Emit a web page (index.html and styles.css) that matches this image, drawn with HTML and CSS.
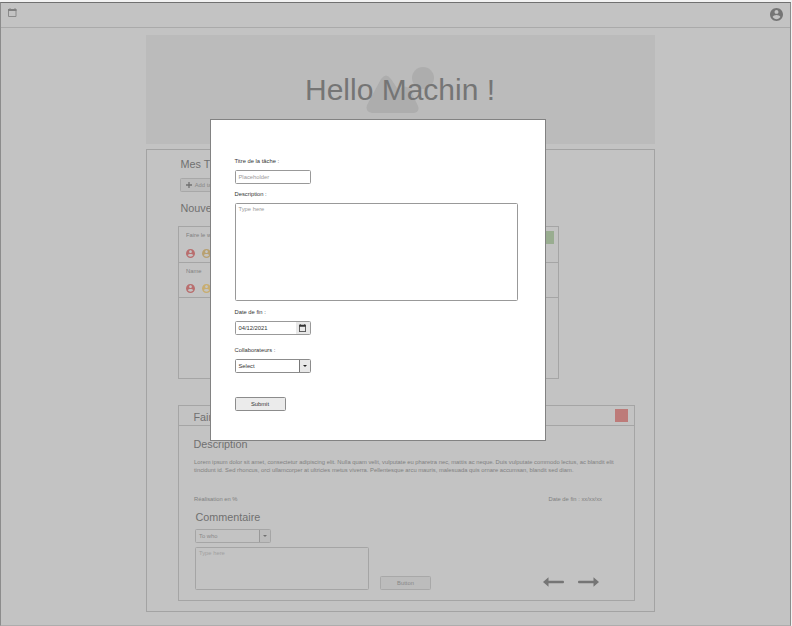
FILE: index.html
```html
<!DOCTYPE html>
<html lang="fr">
<head>
<meta charset="utf-8">
<title>Hello Machin !</title>
<link rel="stylesheet" href="styles.css">
</head>
<body>
<svg width="0" height="0" class="defs">
  <symbol id="user" viewBox="2 2 20 20"><path fill="currentColor" d="M12 2C6.48 2 2 6.48 2 12s4.48 10 10 10 10-4.48 10-10S17.52 2 12 2zm0 3c1.66 0 3 1.34 3 3s-1.340 3-3 3-3-1.340-3-3 1.340-3 3-3zm0 14.200c-2.500 0-4.710-1.280-6-3.220.03-1.990 4-3.080 6-3.080 1.990 0 5.970 1.090 6 3.080-1.290 1.940-3.500 3.220-6 3.220z"/></symbol>
  <symbol id="calendar" viewBox="3 1 18 21"><path fill="currentColor" d="M20 3h-1V1h-2v2H7V1H5v2H4c-.6 0-1 .4-1 1v17c0 .6.400 1 1 1h16c.6 0 1-.4 1-1V4c0-.6-.4-1-1-1zm-1 17H5V8h14v12z"/></symbol>
</svg>
<div class="page">
  <header class="topbar">
    <svg class="topbar-calendar" viewBox="0 0 9 9"><path d="M.5 1.500h7.500v7h-7.500zM2 0v2M7 0v2" fill="none" stroke="#8a8a8a"/><path d="M0 1h8.500v2H0z" fill="#808080"/></svg>
    <svg class="topbar-user"><use href="#user"/></svg>
  </header>
  <section class="hero">
    <svg class="hero-art" viewBox="0 0 70 50"><circle cx="57" cy="12" r="11"/><path d="M15 13Q20 6 25 13L33 25Q38 17 44 23L52 40Q54 46 48 47H6Q-1 46 1 39Z"/></svg>
    <h1>Hello Machin !</h1>
  </section>
  <main class="board">
    <h2>Mes Tâches</h2>
    <button class="add"><svg viewBox="0 0 6 6"><path d="M3 0v6M0 3h6" stroke="#707070" stroke-width="1.300"/></svg>Add task</button>
    <h2 class="second">Nouvelles</h2>
    <section class="list">
      <article class="task first">
        <p>Faire le wireframe</p>
        <div class="people"><svg class="red"><use href="#user"/></svg><svg class="gold"><use href="#user"/></svg></div>
        <i class="swatch green"></i>
      </article>
      <article class="task">
        <p>Name</p>
        <div class="people"><svg class="red"><use href="#user"/></svg><svg class="yellow"><use href="#user"/></svg></div>
      </article>
    </section>
    <section class="detail">
      <div class="detail-head"><h2>Faire</h2><i class="swatch coral"></i></div>
      <h2 class="desc">Description</h2>
      <p class="lorem">Lorem ipsum dolor sit amet, consectetur adipiscing elit. Nulla quam velit, vulputate eu pharetra nec, mattis ac neque. Duis vulputate commodo lectus, ac blandit elit<br>tincidunt id. Sed rhoncus, orci ullamcorper at ultricies metus viverra. Pellentesque arcu mauris, malesuada quis ornare accumsan, blandit sed diam.</p>
      <div class="meta"><span>Réalisation en %</span><span>Date de fin : xx/xx/xx</span></div>
      <h2 class="comment">Commentaire</h2>
      <div class="select dim"><span>To who</span><b><svg viewBox="0 0 4 2"><path d="M0 0h4L2 2z"/></svg></b></div>
      <div class="reply">
        <div class="area">Type here</div>
        <button type="button">Button</button>
        <nav class="arrows">
          <svg viewBox="0 0 21 10"><path d="M0 5L5.500 .3V9.700zM4 3.800H20q1 0 1 1.200t-1 1.200H4z"/></svg>
          <svg viewBox="0 0 21 10"><path d="M21 5L15.500 .3V9.700zM17 3.800H1Q0 3.800 0 5t1 1.200H17z"/></svg>
        </nav>
      </div>
    </section>
  </main>
</div>
<form class="modal">
  <label>Titre de la tâche :</label>
  <div class="field title">Placeholder</div>
  <label>Description :</label>
  <div class="field text">Type here</div>
  <label>Date de fin :</label>
  <div class="field date"><span>04/12/2021</span><b><svg><use href="#calendar"/></svg></b></div>
  <label>Collaborateurs :</label>
  <div class="select"><span>Select</span><b><svg viewBox="0 0 4 2"><path d="M0 0h4L2 2z"/></svg></b></div>
  <button type="button">Submit</button>
</form>
</body>
</html>
```
FILE: styles.css
```css
* { box-sizing: border-box; }
body {
  margin: 0;
  padding-top: 2px;
  height: 626px;
  overflow: hidden;
  position: relative;
  background: #f2f2f2;
  color: #808080;
  font: 5.8px/8px "Liberation Sans", Arial, sans-serif;
}
svg { display: block; }
.defs { position: absolute; }
h1, h2, p { margin: 0; font-weight: normal; }
h2 { font-size: 10.8px; line-height: 14px; color: #707070; white-space: nowrap; }
button {
  display: flex;
  align-items: center;
  justify-content: center;
  width: 51px;
  height: 14px;
  padding: 0;
  border: 1px solid #a8a8a8;
  border-radius: 1.5px;
  background: #bcbcbc;
  color: #888;
  font: inherit;
}
.page {
  width: 791px;
  height: 624px;
  border: 1px solid #8c8c8c;
  border-top-color: #707070;
  border-bottom-color: #adadad;
  background: #c3c3c3;
}
.topbar {
  display: flex;
  justify-content: space-between;
  height: 25px;
  padding: 5px 7px 0;
  border-bottom: 1px solid #aaa;
}
.topbar-calendar { width: 9px; height: 9px; }
.topbar-user { width: 13px; height: 13px; color: #757575; }
.hero {
  position: relative;
  width: 509px;
  height: 109px;
  margin: 7px 0 0 145px;
  background: #bbb;
}
.hero-art { position: absolute; left: 220px; top: 31px; width: 70px; height: 50px; fill: #adadad; }
.hero h1 {
  position: relative;
  padding: 35px 0 0 159px;
  font-size: 30px;
  line-height: 40px;
  color: #757575;
}
.board {
  width: 509px;
  height: 463px;
  margin: 5px 0 0 145px;
  padding: 7px 0 0 31px;
  border: 1px solid #a3a3a3;
}
.board > h2 { width: 33px; padding-left: 2.5px; overflow: hidden; }
.add { margin: 7px 0 0 2px; padding-right: 8px; gap: 3px; }
.add svg { width: 6px; height: 6px; }
.board > .second { margin-top: 9px; }
.list {
  width: 381px;
  height: 153px;
  margin-top: 11px;
  border: 1px solid #a5a5a5;
}
.task {
  position: relative;
  height: 35px;
  padding: 4px 7px 5px;
  border-bottom: 1px solid #a5a5a5;
}
.first { height: 36px; }
.task p { width: 24px; overflow: hidden; white-space: nowrap; }
.people { display: flex; gap: 7px; padding-top: 10px; }
.people svg { width: 9px; height: 9px; }
.task:not(.first) .people { padding-top: 9px; }
.red { color: #b96e6e; }
.gold { color: #b8a070; }
.yellow { color: #c8ad70; }
.swatch { display: block; width: 13px; height: 13px; }
.green { position: absolute; top: 4px; right: 4px; background: #99ad90; }
.coral { background: #bd7b79; }
.detail {
  width: 457px;
  height: 196px;
  margin-top: 26px;
  border: 1px solid #a5a5a5;
}
.detail-head {
  display: flex;
  justify-content: space-between;
  height: 20px;
  padding: 3px 6px 0 14.500px;
  border-bottom: 1px solid #a5a5a5;
}
.detail-head h2 { margin-top: 1px; }
.desc { margin: 11px 0 0 14.500px; }
.lorem { margin: 7px 0 0 15px; white-space: nowrap; letter-spacing: .011px; }
.meta { display: flex; justify-content: space-between; margin: 21px 32px 0 15px; }
.comment { margin: 7px 0 0 16.500px; }
.select {
  display: flex;
  width: 76px;
  height: 14px;
  border: 1px solid #8c8c8c;
  border-radius: 1.5px;
  color: #333;
}
.select span { flex: 1; padding: 2px 3px; }
.select b { display: flex; align-items: center; justify-content: center; width: 11px; border-left: 1px solid #777; background: #e8e8e8; }
.select b svg { width: 4px; height: 2px; fill: #222; }
.dim { margin: 5px 0 0 16px; border-color: #a5a5a5; color: #888; }
.dim b { background: #bcbcbc; border-color: #999; }
.dim b svg { fill: #707070; }
.reply { display: flex; align-items: flex-end; margin: 4px 0 0 16px; }
.area { width: 174px; height: 43px; padding: 1px 3px; border: 1px solid #a5a5a5; border-radius: 1.5px; color: #a0a0a0; }
.reply button { margin-left: 11px; }
.arrows { display: flex; gap: 14px; margin: 0 0 3px 112px; }
.arrows svg { width: 21px; height: 10px; fill: #757575; }
.modal {
  position: absolute;
  left: 209.5px;
  top: 119px;
  width: 336.5px;
  height: 322px;
  padding: 37px 24px 0;
  border: 1px solid #828282;
  background: #fff;
  color: #333;
}
.modal label { display: block; }
.field { border: 1px solid #999; border-radius: 1.5px; color: #999; width: 76px; height: 14px; padding: 2px 3px; }
.title { margin: 5px 0 6px; }
.text { width: 283px; height: 98px; margin: 5px 0 7px; padding-top: 1px; }
.date { display: flex; justify-content: space-between; margin: 5px 0 11px; padding: 0 0 0 3px; color: #333; }
.date span { padding-top: 2px; }
.date b { display: flex; align-items: center; justify-content: center; width: 14px; background: #e8e8e8; color: #333; }
.date svg { width: 7px; height: 8px; }
.modal .select { margin: 5px 0 24px; }
.modal button { border-color: #8c8c8c; background: #ebebeb; color: #333; }
```
